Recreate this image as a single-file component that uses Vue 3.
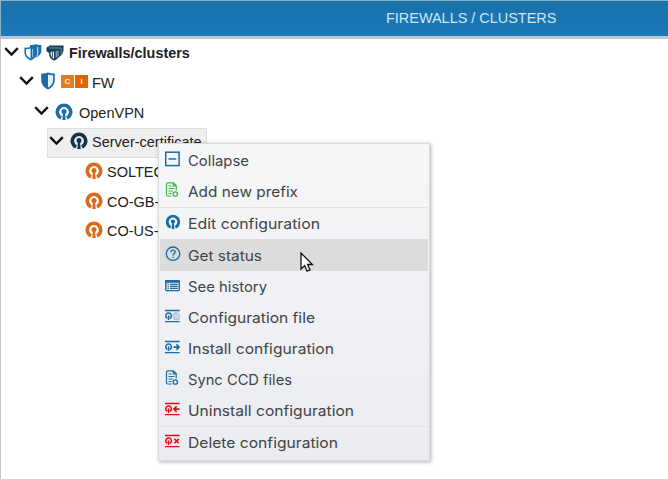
<script setup>
const tree = [
  { label: 'Firewalls/clusters', level: 0, kind: 'root', open: true },
  { label: 'FW', level: 1, kind: 'fw', open: true },
  { label: 'OpenVPN', level: 2, kind: 'vpn', tone: 'blue', open: true },
  { label: 'Server-certificate', level: 3, kind: 'vpn', tone: 'navy', open: true, selected: true },
  { label: 'SOLTEC', level: 4, kind: 'vpn', tone: 'orange' },
  { label: 'CO-GB-1', level: 4, kind: 'vpn', tone: 'orange' },
  { label: 'CO-US-1', level: 4, kind: 'vpn', tone: 'orange' },
]
const menu = [
  { label: 'Collapse', icon: 'minus', width: 61 },
  { label: 'Add new prefix', icon: 'doc', tone: 'green', width: 110 },
  { label: 'Edit configuration', icon: 'vpn', width: 132, sep: true },
  { label: 'Get status', icon: 'help', width: 74, sep: true, active: true },
  { label: 'See history', icon: 'list', width: 79 },
  { label: 'Configuration file', icon: 'file', width: 127 },
  { label: 'Install configuration', icon: 'install', width: 146 },
  { label: 'Sync CCD files', icon: 'doc', width: 104 },
  { label: 'Uninstall configuration', icon: 'uninstall', tone: 'red', width: 166 },
  { label: 'Delete configuration', icon: 'delete', tone: 'red', width: 150, sep: true },
]
</script>

<template>
  <div class="app">
    <header class="bar"><span>FIREWALLS / CLUSTERS</span></header>
    <main class="panel">
      <div v-for="n in tree" :key="n.label" class="node" :class="['l' + n.level, { selected: n.selected }]">
        <svg v-if="n.open" class="chev" width="16" height="10" viewBox="0 0 16 10"><path d="M1.2 1.2 7.5 7.5 13.8 1.2" fill="none" stroke="#111" stroke-width="2.4" /></svg>
        <template v-if="n.kind === 'root'">
          <svg class="root1" width="18" height="17" viewBox="0 0 18 17">
            <path d="M6 .9Q9 1.3 11.7.3 14.5 1.3 17.4.9V7Q17.2 11 12.2 13.4L6 8Z" fill="#1a72ae" />
            <path d="M13.7 3V9.2Q13.4 11 12.6 12.4" fill="none" stroke="#e4f1f9" stroke-width="1" />
            <path d="M.4 3.6Q3.6 4 6.7 2.8 9.8 4 13 3.6V9Q12.8 13.6 6.7 16.6.6 13.6.4 9Z" fill="#1a72ae" />
            <path d="M2 5.3Q4.4 5.2 6.5 4.5V14.6Q2.2 12.2 2 9Z" fill="#f2f9fd" />
            <path d="M8.6 5V13.2" stroke="#b9d9ec" stroke-width=".8" />
          </svg>
          <svg class="root2" width="18" height="16" viewBox="0 0 18 16">
            <path d="M3 .5H17.5V5.5Q17.2 9 14 11V3.5H3Z" fill="#143f5c" />
            <path d="M.5 3.3Q.5 1.6 2.5 1.6H15.8V7Q15.4 10.8 12 12.8L3 8 .5 6.2Z" fill="#143f5c" />
            <path d="M3 3H15.2V9" fill="none" stroke="#8fb3c8" stroke-width=".7" />
            <path d="M3 5.1H13.4V9.4Q13.2 13.4 8.2 15.7 3.2 13.4 3 9.4Z" fill="#143f5c" />
            <path d="M4.6 6.7H8V14Q4.8 12 4.6 9.4Z" fill="#f2f6f9" />
            <path d="M10.2 6V12.6M12 5.4V11.6" stroke="#dce8ef" stroke-width=".8" />
            <path d="M6.4 7V12.4" stroke="#143f5c" stroke-width=".9" />
          </svg>
        </template>
        <template v-else-if="n.kind === 'fw'">
          <svg class="shield" width="14" height="18" viewBox="0 0 14 18">
            <path d="M.2 1.5Q3.8 1.8 7 .5 10.2 1.8 13.8 1.5V8.5Q13.6 14.2 7 17.6.4 14.2.2 8.5Z" fill="#1a6ca6" />
            <path d="M7 2.5Q9.5 3.4 12.1 3.3V8.4Q11.8 12.8 7 15.5Z" fill="#e3f0f8" />
          </svg>
          <span class="tag c">C</span><span class="tag i">I</span>
        </template>
        <svg v-else class="vpn" :class="n.tone" width="18" height="18" viewBox="0 0 18 18">
          <path d="M6.1 15A6.7 6.7 0 1 1 11.9 15" fill="none" stroke="currentColor" stroke-width="3.6" />
          <circle cx="9" cy="8.6" r="2.5" fill="currentColor" /><path d="M8 9H10L10.7 17H7.3Z" fill="currentColor" />
        </svg>
        <span class="name">{{ n.label }}</span>
      </div>
    </main>

    <nav class="menu">
      <div v-for="m in menu" :key="m.label" class="item" :class="{ sep: m.sep, active: m.active }">
        <svg class="ico" :class="m.tone" width="16" height="16" viewBox="0 0 16 16" fill="none" stroke="currentColor">
          <template v-if="m.icon === 'minus'"><rect x=".7" y="1.2" width="13.4" height="13.4" stroke-width="1.5" /><path d="M3.5 8H11.3" stroke-width="1.5" /></template>
          <template v-else-if="m.icon === 'doc'">
            <path d="M6.5 14H2.7Q1.5 14 1.5 12.8V2Q1.5.8 2.7.8H8.5L11.2 3.5V8.5M8.3.8V3.8H11.2M3.5 4H6.5M3.5 6.5H9.5M3.5 9H8M3.5 11.5H6.5" stroke-width="1.2" />
            <circle cx="10.3" cy="12" r="2.2" stroke-width="1.3" />
          </template>
          <template v-else-if="m.icon === 'vpn'">
            <path d="M5.6 13.2A5.8 5.8 0 1 1 10.4 13.2" stroke-width="2.9" />
            <circle cx="8" cy="7.6" r="2.1" fill="currentColor" stroke="none" /><path d="M7.2 8H8.8L9.4 15H6.6Z" fill="currentColor" stroke="none" />
          </template>
          <template v-else-if="m.icon === 'help'">
            <circle cx="8" cy="7.7" r="6.7" stroke-width="1.3" />
            <path d="M5.8 6.2Q6 4.2 8 4.2 10.2 4.2 10.2 6.1 10.2 7.1 8.8 7.9 8 8.4 8 9.5" stroke-width="1.3" /><path d="M8 10.7V12.1" stroke-width="1.4" />
          </template>
          <template v-else-if="m.icon === 'list'">
            <rect x=".8" y="3.6" width="13.4" height="10" rx=".8" stroke-width="1.4" /><path d="M.4 4.4H14.6" stroke-width="2.8" />
            <path d="M2.5 7.4H3.8M2.5 9.4H3.8M2.5 11.4H3.8M5 7.4H12.7M5 9.4H12.7M5 11.4H12.7" stroke-width="1.2" />
          </template>
          <template v-else>
            <path d="M0 2.5H14.6M0 13.7H14.6" stroke-width="1.3" />
            <path d="M2.4 10.4A2.8 2.8 0 1 1 4.8 10.4" stroke-width="1.5" /><path d="M3.6 7.4V12" stroke-width="1.5" />
            <template v-if="m.icon === 'file'"><path d="M9 5H12.7L14 6.3V11.2H9ZM10.3 7H12.5M10.3 9.1H12.5" stroke-width=".9" opacity=".55" /></template>
            <path v-else-if="m.icon === 'install'" d="M8.5 8.1H14M11.4 5.3 14.1 8.1 11.4 10.9" stroke-width="1.6" />
            <path v-else-if="m.icon === 'uninstall'" d="M14.5 8.1H9M11.6 5.3 8.9 8.1 11.6 10.9" stroke-width="1.6" />
            <path v-else d="M9.4 5.9 13.8 10.3M13.8 5.9 9.4 10.3" stroke-width="1.5" />
          </template>
        </svg>
        <svg class="label" :width="m.width + 4" height="24"><text x="0" y="17" :textLength="m.width" lengthAdjust="spacingAndGlyphs">{{ m.label }}</text></svg>
      </div>
    </nav>
    <svg class="cursor" width="14" height="21" viewBox="0 0 14 21"><path d="M1 1V17L4.7 13.6 7.1 19.2 10 18 7.6 12.5H12.4Z" fill="#fff" stroke="#111" stroke-width="1.3" /></svg>
  </div>
</template>

<style>
body { margin: 0; overflow: hidden; background: #fff; }
</style>
<style scoped>
.app { position: relative; width: 668px; height: 479px; box-sizing: border-box; overflow: hidden; background: #fff; font-family: "Liberation Sans", sans-serif; display: flex; flex-direction: column; }
.bar { box-sizing: border-box; height: 39px; border-top: 1px solid #8bb3c8; border-left: 1px solid #8bb3c8; border-bottom: 3px solid #bdc6ce; background: linear-gradient(#1871ab, #1a79b9); display: flex; padding-left: 385px; color: #d3e6f3; font-size: 14.45px; line-height: 34px; }
.panel { flex: 1; border-left: 1px solid #c3c4cc; }
.node { display: flex; align-items: center; height: 29.67px; font-size: 14.5px; color: #222; white-space: nowrap; box-sizing: border-box; }
.name { margin-top: -1px; }
.l0 { padding-left: 2px; font-weight: bold; font-size: 14.4px; }
.l1 { padding-left: 17px; }
.l2 { padding-left: 32px; }
.l3 { margin-left: 46px; width: 160px; }
.l4 { padding-left: 84px; }
.selected { background: #efefef; box-shadow: inset 0 0 0 1px #dedede; }
.chev { margin: 0 5px 4px 1px; flex: none; }
.root1 { margin: 0 4px 2px -1px; }
.root2 { margin: 0 5px 2px 0; }
.shield { margin: 0 6px 4px 1px; }
.tag { width: 13px; height: 13px; margin-bottom: 4px; color: #ffe9cf; font: bold 8px/14px "Liberation Sans", sans-serif; text-align: center; }
.c { background: #e37b25; margin-right: 1px; }
.i { background: #df6502; margin-right: 4px; }
.vpn { margin: 0 6px 3px 0; flex: none; }
.l3 .chev { margin-left: 2px; }
.l3 .vpn { margin: 0 4px 3px 0; }
.l4 .vpn { margin: 0 4px 3px 0; }
.blue { color: #1b6fa9; }
.navy { color: #12354e; }
.orange { color: #d96b1c; }
.menu { position: absolute; left: 158px; top: 143px; width: 272px; height: 318px; box-sizing: border-box; padding: 1px; border: 1px solid #dadbdd; background: linear-gradient(#f6f7f8, #eaecf1); box-shadow: 1px 1px 4px rgba(0,0,0,.3); }
.item { height: 31px; display: flex; align-items: center; padding-left: 5px; }
.sep { border-top: 1px solid #e1e3e5; }
.active { background: #dcdcdc; border-color: #dcdcdc; }
.ico { color: #1b6ca6; margin: 0 7px 4px 0; }
.ico.green { color: #43b649; }
.ico.red { color: #d90f16; }
.label { font-family: Inter, sans-serif; font-size: 14.5px; fill: #424447; }
.cursor { position: absolute; left: 300px; top: 252px; }
</style>
